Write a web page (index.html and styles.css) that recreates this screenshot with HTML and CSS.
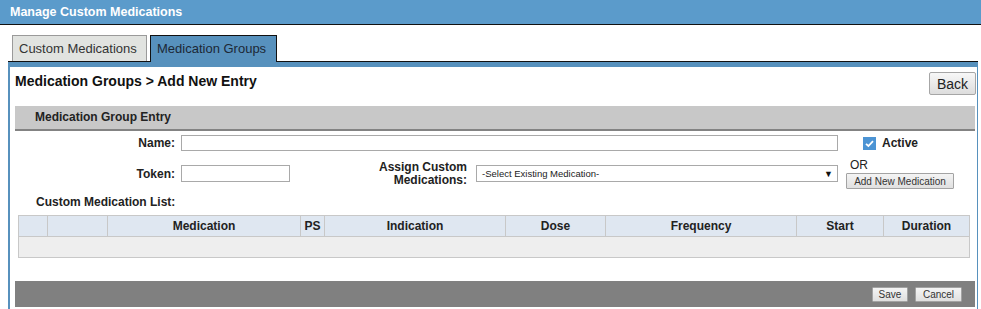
FILE: index.html
```html
<!DOCTYPE html>
<html>
<head>
<meta charset="utf-8">
<link rel="stylesheet" href="styles.css">
</head>
<body>
<div class="app-header">Manage Custom Medications</div>
<div class="tabs">
  <div class="tab">Custom Medications</div>
  <div class="tab tab-active">Medication Groups</div>
</div>
<div class="panel">
  <div class="content">
    <div class="title-row">
      <div class="page-title">Medication Groups &gt; Add New Entry</div>
      <button class="btn-back">Back</button>
    </div>
    <div class="section-bar">Medication Group Entry</div>
    <div class="form-row row-name">
      <label class="lbl lbl-name">Name:</label>
      <input class="txt txt-name" type="text">
      <span class="check"><svg width="13" height="13" viewBox="0 0 13 13"><rect width="13" height="13" fill="#4c94d4"/><path d="M3 6.8 L5.4 9 L10 4.2" stroke="#fff" stroke-width="1.8" fill="none"/></svg></span>
      <span class="active-lbl">Active</span>
    </div>
    <div class="form-row row-token">
      <label class="lbl lbl-name">Token:</label>
      <input class="txt txt-token" type="text">
      <label class="lbl lbl-assign">Assign Custom<br>Medications:</label>
      <div class="select"><span>-Select Existing Medication-</span><span class="arrow">&#9660;</span></div>
      <div class="or-col">
        <div class="or">OR</div>
        <button class="btn-small btn-add">Add New Medication</button>
      </div>
    </div>
    <div class="list-lbl">Custom Medication List:</div>
    <table class="grid">
      <colgroup>
        <col style="width:29px"><col style="width:60px"><col style="width:193px"><col style="width:24px"><col style="width:181px"><col style="width:100px"><col style="width:191px"><col style="width:87px"><col>
      </colgroup>
      <thead>
        <tr><th></th><th></th><th>Medication</th><th>PS</th><th>Indication</th><th>Dose</th><th>Frequency</th><th>Start</th><th>Duration</th></tr>
      </thead>
      <tbody>
        <tr><td colspan="9"></td></tr>
      </tbody>
    </table>
    <div class="footer">
      <button class="btn-small btn-save">Save</button>
      <button class="btn-small btn-cancel">Cancel</button>
    </div>
  </div>
</div>
</body>
</html>
```
FILE: styles.css
```css
html, body {
  margin: 0;
  padding: 0;
  background: #fff;
  font-family: "Liberation Sans", Arial, sans-serif;
  color: #111;
  overflow: hidden;
}
.app-header {
  height: 24px;
  line-height: 24px;
  background: #5b9bcb;
  border-bottom: 1px solid #111;
  color: #fff;
  font-weight: bold;
  font-size: 12.5px;
  padding-left: 10px;
}
.tabs {
  display: flex;
  padding: 10px 0 0 12px;
  gap: 3px;
  height: 26px;
}
.tab {
  box-sizing: border-box;
  height: 26px;
  padding: 0 6px;
  line-height: 25px;
  font-size: 13px;
  color: #333;
  background: #e1e3e0;
  border: 1px solid #9a9a9a;
  border-bottom: none;
  width: 135px;
}
.tab-active {
  background: #5791bd;
  color: #1c2836;
  border-color: #111;
  width: 127px;
  height: 27px;
  position: relative;
  z-index: 1;
}
.panel {
  margin: 0 3px 0 8px;
  border-top: 1px solid #111;
  background: #5791bd;
  padding: 5px 1px 0 2px;
}
.content {
  background: #fff;
  padding: 0 1px 0 5px;
  height: 242px;
}
.title-row {
  display: flex;
  justify-content: space-between;
  align-items: flex-start;
  padding-top: 5px;
}
.page-title {
  font-weight: bold;
  font-size: 14px;
  padding-top: 1px;
  color: #111;
}
.btn-back {
  box-sizing: border-box;
  width: 47px;
  height: 23px;
  font-family: "Liberation Sans", Arial, sans-serif;
  font-size: 14px;
  color: #222;
  background: linear-gradient(#f7f7f7, #dddddd);
  border: 1px solid #a6a6a6;
  border-radius: 2px;
  padding: 0;
}
.section-bar {
  margin-top: 11px;
  margin-right: 1px;
  height: 23px;
  line-height: 22px;
  background: #c8c8c8;
  border-bottom: 2px solid #838383;
  font-weight: bold;
  font-size: 12px;
  color: #222;
  padding-left: 20px;
}
.form-row {
  display: flex;
  align-items: center;
}
.row-name {
  margin-top: 4px;
  height: 16px;
}
.row-token {
  margin-top: 7px;
}
.lbl {
  font-weight: bold;
  font-size: 12px;
  color: #222;
  text-align: right;
}
.lbl-name {
  width: 160px;
  margin-right: 6px;
}
.txt {
  box-sizing: border-box;
  border: 1px solid #a9a9a9;
  margin: 0;
  padding: 0;
  background: #fff;
}
.txt-name {
  width: 657px;
  height: 16px;
}
.txt-token {
  width: 109px;
  height: 17px;
}
.check {
  display: flex;
  margin-left: 25px;
}
.active-lbl {
  font-weight: bold;
  font-size: 12px;
  margin-left: 6px;
  color: #222;
}
.lbl-assign {
  width: 177px;
  line-height: 13px;
}
.select {
  box-sizing: border-box;
  margin-left: 9px;
  width: 362px;
  height: 17px;
  border: 1px solid #a9a9a9;
  display: flex;
  justify-content: space-between;
  align-items: center;
  padding: 0 4px 0 5px;
  font-size: 9.5px;
  color: #222;
}
.arrow {
  font-size: 9px;
  color: #111;
}
.or-col {
  margin-left: 8px;
  display: flex;
  flex-direction: column;
}
.or {
  font-size: 12px;
  padding-left: 4px;
  line-height: 14px;
  color: #222;
}
.btn-small {
  box-sizing: border-box;
  font-family: "Liberation Sans", Arial, sans-serif;
  font-size: 10px;
  color: #333;
  background: linear-gradient(#f4f4f4, #e0e0e0);
  border: 1px solid #a3a3a3;
  padding: 0;
  border-radius: 1px;
}
.btn-add {
  width: 108px;
  height: 16px;
  margin-top: 1px;
}
.list-lbl {
  margin-top: 6px;
  padding-left: 21px;
  font-weight: bold;
  font-size: 12px;
  color: #222;
}
.grid {
  margin-top: 6px;
  margin-left: 3px;
  width: 952px;
  border-collapse: collapse;
  table-layout: fixed;
}
.grid th {
  height: 20px;
  background: #dfe7f1;
  border: 1px solid #c8c8c8;
  font-size: 12px;
  font-weight: bold;
  color: #222;
  padding: 0;
  text-align: center;
}
.grid td {
  height: 20px;
  background: #eeeeee;
  border: 1px solid #c8c8c8;
  padding: 0;
}
.footer {
  margin-top: 23px;
  margin-right: 1px;
  height: 26px;
  background: #808080;
  display: flex;
  justify-content: flex-end;
  align-items: center;
  gap: 7px;
  padding-right: 13px;
}
.btn-save {
  width: 36px;
  height: 15px;
}
.btn-cancel {
  width: 47px;
  height: 15px;
}
```
